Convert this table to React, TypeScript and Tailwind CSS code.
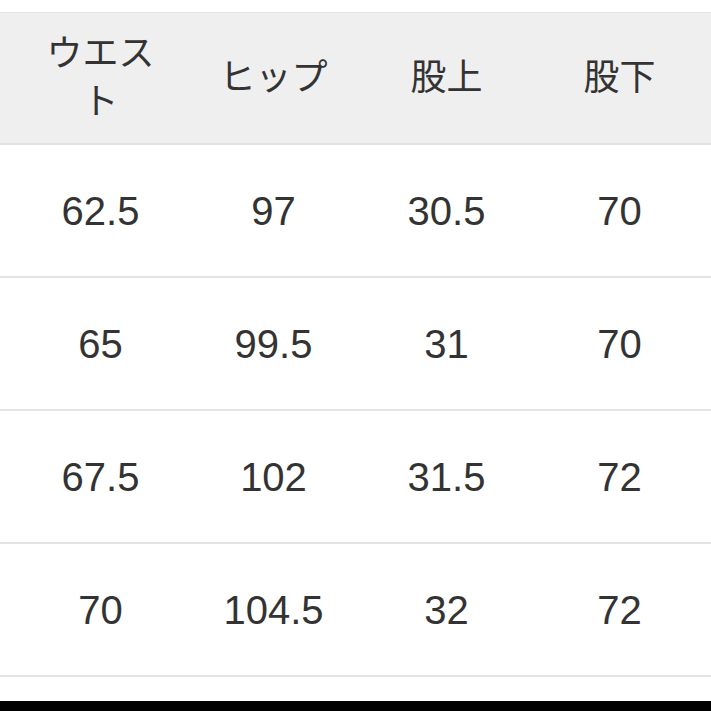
const header = ["ウエス\nト", "ヒップ", "股上", "股下"];

const rows = [
  ["62.5", "97", "30.5", "70"],
  ["65", "99.5", "31", "70"],
  ["67.5", "102", "31.5", "72"],
  ["70", "104.5", "32", "72"],
];

export default function App() {
  return (
    <div
      className="w-[711px] h-[711px] bg-white flex flex-col overflow-hidden text-[#333]"
      style={{ fontFamily: '"Liberation Sans", "Noto Sans CJK JP", sans-serif' }}
    >
      <div className="h-[12px] shrink-0" />
      <div className="shrink-0 border-t border-[#e4e4e4] border-b-2 border-b-[#e2e2e2] bg-[#efefef] h-[133px] grid grid-cols-4 pl-[14px] pr-[5px] items-center">
        {header.map((h, i) => (
          <div
            key={i}
            className="text-center text-[36px] leading-[48px] whitespace-pre-line"
          >
            {h}
          </div>
        ))}
      </div>
      {rows.map((r, i) => (
        <div
          key={i}
          className="shrink-0 h-[133px] border-b-2 border-[#e4e4e4] grid grid-cols-4 pl-[14px] pr-[5px] items-center"
        >
          {r.map((c, j) => (
            <div key={j} className="text-center text-[40px] leading-none">
              {c}
            </div>
          ))}
        </div>
      ))}
      <div className="flex-1" />
      <div className="h-[10px] bg-black shrink-0" />
    </div>
  );
}
